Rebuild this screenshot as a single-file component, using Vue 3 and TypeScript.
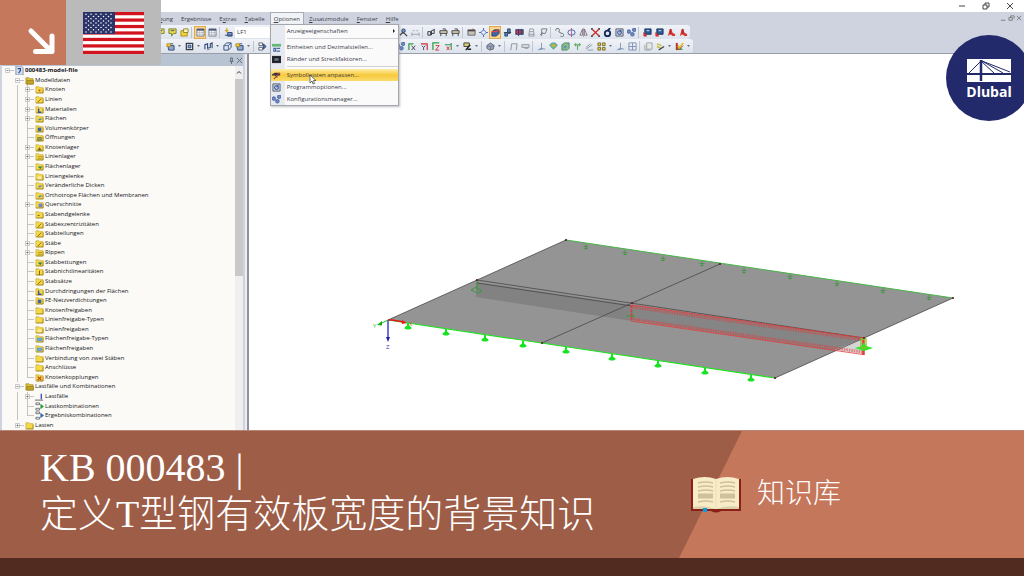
<script setup lang="ts">
type Shape = { d: string; f?: string; s?: string; w?: number }
interface Tool { icon: string; label: string; caret?: boolean; on?: boolean }
interface Row { t: string; l: number; e?: '+' | '-'; k: string; last?: boolean }

const N = '#2c4577'
const G = '#8d929d'
const K = '#3b3f49'
const R = '#d22f2f'
const Y = '#f0d23c'

const icons: Record<string, Shape[]> = {
  folder: [{ d: 'M1 2h3.500l1 1H9v6H1z', f: '#f5da48', s: '#c4a431', w: 0.7 }, { d: 'M1.500 8.800h7.500V4', s: '#96781c', w: 0.7 }],
  folderDark: [{ d: 'M1 2h3.500l1 1H9v6H1z', f: '#e0c030', s: '#9c8322', w: 0.7 }, { d: 'M2 5h7.500v4H2z', f: '#c2a428', s: '#857018', w: 0.6 }],
  open: [{ d: 'M1 3h3l1 1h3v5H1z', f: Y, s: '#a98a1c' }, { d: 'M4 1h5v4H4z', f: '#fff7c0', s: '#8a8420' }],
  note: [{ d: 'M1 1h8v5H6L4 9V6H1z', f: '#f2e04f', s: '#6d7a34' }, { d: 'M3 3h4', s: N }],
  table: [{ d: 'M1 1h8v8H1z', f: '#f5f7fa', s: '#777c88' }, { d: 'M1 2h8', s: '#4c5a78', w: 2 }, { d: 'M4 3v6M7 3v6M1 5h8M1 7h8', s: '#a1a7b5', w: 0.6 }],
  load: [{ d: 'M1 8h8M4 5h5v4H4z', f: '#7d93c0', s: N }, { d: 'M3 0v5M1 3h4', s: '#d5a72b', w: 1.4 }],
  box: [{ d: 'M2 4h7v5H3z', f: '#92a6cf', s: N }, { d: 'M1 2h4v3H1z', f: Y, s: '#b08b22' }, { d: 'M5 2h3', s: N }],
  frame: [{ d: 'M1.5 1.5h7v7h-7z', s: K, w: 1.4 }, { d: 'M3.5 3.5h3v3h-3z', f: '#8fb0e4', s: N }],
  wave: [{ d: 'M1 8V3l3-1v5l3-1V2l2-1v6', s: N, w: 1.2 }, { d: 'M3 9l4-1', s: G }],
  cube: [{ d: 'M1 4l3-3h5v5l-3 3H1z', f: '#dce4f2', s: N }, { d: 'M1 4h5l3-3M6 4v5', s: N, w: 0.8 }],
  flow: [{ d: 'M1 1h4v3H1zM1 6h4v3H1z', f: '#fff', s: K, w: 0.8 }, { d: 'M6 2l3 3-3 3z', f: '#4670b6', s: N }],
  person: [{ d: 'M3 3a2 2 0 1 0 4 0 2 2 0 1 0-4 0', f: '#6f8fc0', s: N }, { d: 'M1 8l3-3 2 1 3 3', s: K, w: 1.4 }],
  dims: [{ d: 'M1 7h8M1 5v4M9 5v4M2 3h2M6 3h2', s: G, w: 0.8 }],
  wrench: [{ d: 'M1 4h3v4H1zM5 8V3l3-1M8 1v5H5', s: K, w: 1.1 }],
  beam: [{ d: 'M1 3h8v3H1z', f: '#d9cfa5', s: K }, { d: 'M2 6v3M8 6v3M4 1h3v2', s: K }],
  beamG: [{ d: 'M1 3h8v3H1z', f: '#dfe1e5', s: G }, { d: 'M4 7h4', s: G }],
  list: [{ d: 'M1 2h8v6H1z', f: '#c6c3b4', s: '#606570' }, { d: 'M1 3h8', s: K, w: 1.4 }, { d: 'M6 1l3 2', s: '#a34d2e' }],
  target: [{ d: 'M5 0v10M0 5h10', s: N, w: 0.8 }, { d: 'M5 2l3 3-3 3-3-3z', f: '#e8edff', s: '#4560c0' }],
  render: [{ d: 'M1 4l3-2h5v4L6 9H1z', f: '#3e66a6', s: N }, { d: 'M1 4h5l3-2', s: '#e8443a', w: 1.4 }],
  solid: [{ d: 'M2 5h3V1h3v5H5v3H2z', f: '#4b83a6', s: N }, { d: 'M1 5h8', s: K }],
  solidR: [{ d: 'M1 2h8v5H1z', f: '#c83a3a', s: '#253e73', w: 1.2 }, { d: 'M4 1v8M7 1v6', s: N, w: 1.1 }],
  tower: [{ d: 'M3 1h4l1 8H2zM3 4h4M2 7h6', s: G, w: 0.9 }],
  flag: [{ d: 'M3 9V1h6L7 6H3M1 8l3-3', s: '#6b7487', w: 1 }],
  link: [{ d: 'M1 3a2 2 0 1 1 3 1l3 2a2 2 0 1 1-1 3', s: '#555b6a', w: 1 }],
  globe: [{ d: 'M1 5a4 3 0 1 0 8 0 4 3 0 1 0-8 0', s: '#4465c1', w: 1.1 }, { d: 'M5 0v10', s: '#c65c5c' }],
  mirror: [{ d: 'M4 1v7H1zM6 1v7h3z', s: '#666c79', w: 0.9 }, { d: 'M5 0v10', s: '#c65c5c', w: 0.6 }],
  cross: [{ d: 'M1 1l8 8M9 1L1 9', s: R, w: 1.5 }, { d: 'M0 0h2v2H0zM8 0h2v2H8zM0 8h2v2H0zM8 8h2v2H8z', f: '#555' }],
  ring: [{ d: 'M2 6a3 3 0 1 0 6 0 3 3 0 1 0-6 0M5 3l3-3', s: '#172b59', w: 2 }],
  gear: [{ d: 'M1 1h8v8H1z', f: '#cbd0d8', s: '#555b68' }, { d: 'M3 5a2 2 0 1 0 4 0 2 2 0 1 0-4 0M7 2L5 5', f: '#f7f9ff', s: '#3151a0', w: 1.2 }],
  balls: [{ d: 'M0 4a2 2 0 1 0 4 0 2 2 0 1 0-4 0M6 2a2 2 0 1 0 4 0 2 2 0 1 0-4 0M4 7a2 2 0 1 0 4 0 2 2 0 1 0-4 0', f: '#6c8bc8', s: '#324f91', w: 0.8 }],
  module: [{ d: 'M2 1h7v6H2z', f: '#2a5b93', s: '#1e365f' }, { d: 'M4 3h3', s: '#e4efff' }, { d: 'M1 5v4h3z', f: '#d93a3a', s: R }],
  pdf: [{ d: 'M3 1h2l1 4 3 2v2H6L4 7 1 9z', f: '#d93636' }, { d: 'M4 1v6', s: '#a52020' }],
  axisX: [{ d: 'M1 9V2h5', s: '#31a044', w: 1.4 }, { d: 'M4 4l4 5M8 4L4 9', s: K }],
  axisY: [{ d: 'M1 2h7v7', s: R, w: 1.3 }, { d: 'M2 4l2 2 2-2M4 6v3', s: N }],
  axisZ: [{ d: 'M1 9V1h7', s: '#31a044', w: 1.4 }, { d: 'M4 4h4L4 9h4', s: R }],
  axisN: [{ d: 'M1 3h7M8 1v8', s: '#34914d', w: 1.2 }, { d: 'M3 5l3 4M6 5L3 9', s: R }],
  pencil: [{ d: 'M1 1h6v4H1z', f: '#d5d06e', s: K }, { d: 'M3 9l5-6M5 8h4', s: '#222', w: 1.5 }],
  iso: [{ d: 'M1 4l4-3 4 3-1 4-4 1-3-2z', f: '#9ea8b8', s: '#59657a' }, { d: 'M1 4l4 1 4-1M5 5v4', s: '#59657a', w: 0.7 }],
  bracket: [{ d: 'M2 9L3 2h6L8 9', s: '#888e9b', w: 1 }],
  support: [{ d: 'M5 1v6L1 9M5 7l4 1', s: '#8795ae', w: 1 }, { d: 'M3 8h3', s: '#5371b2' }],
  color: [{ d: 'M1 4c0-4 8-4 8 0L5 8z', f: '#72bd68', s: '#4f91bb' }, { d: 'M3 4h4', s: '#e1af36', w: 2 }],
  block: [{ d: 'M1 3l3-2h5v6L7 9H1z', f: '#8cbf81', s: '#4a8770' }, { d: 'M3 4h3v3H3z', f: '#5e91c0' }],
  tree: [{ d: 'M5 9V3M1 3h8M3 1v4M7 1v4', s: '#5fac68', w: 1.2 }],
  diag: [{ d: 'M1 8l7-5M1 6l5-4M3 9h6', s: '#8997a1', w: 1 }],
  squares: [{ d: 'M1 1h3v3H1zM6 1h3v3H6zM1 6h3v3H1zM6 6h3v3H6z', f: '#e6cc47', s: '#746c31' }],
  grid: [{ d: 'M1 1h8v8H1zM5 1v8M1 5h8', s: '#7f8fb2', w: 1 }],
  pages: [{ d: 'M3 1h6v7H3zM1 3v6h6', s: '#9ba1a8', f: '#e8e9df' }],
  paint: [{ d: 'M1 2l5 2M1 5l5 2', s: '#c4bd3c', w: 1.6 }, { d: 'M3 9l6-4', s: K, w: 1.4 }],
  palette: [{ d: 'M1 1v8h8z', f: '#36a659' }, { d: 'M1 1h2v8H1z', f: '#c62c2c' }, { d: 'M3 4l2 3 4-6', s: '#e3bb2c', w: 1.8 }, { d: 'M4 9l5-5', s: '#c62c2c' }],
  units: [{ d: 'M0 1h10v3H0z', f: '#62b878' }, { d: 'M2 6h2v3H2zM5 6h4M5 9h4', s: '#4568a5', w: 1.2 }],
  margins: [{ d: 'M0 1h10v8H0z', f: '#24272d' }, { d: 'M2 3h6v4H2z', f: '#68707c', s: '#10131a' }],
  tools: [{ d: 'M0 4l3-2h6v3H0z', f: '#3d3038' }, { d: 'M2 9l5-5M6 3h3', s: '#b8402f', w: 1.3 }, { d: 'M3 4l3 3', s: '#4b4e58', w: 1.3 }],
  lc: [{ d: 'M0 9h9', s: '#555' }, { d: 'M7 2v6', s: '#3a4eb4', w: 1.5 }],
  lk: [{ d: 'M1 1h4v2H1zM1 7h4v2H1z', s: '#4d535c', w: 0.8 }, { d: 'M6 2l4 3-4 3z', f: '#2c9d49' }],
  ek: [{ d: 'M1 1h4v2H1zM1 7h4v2H1z', s: '#4d535c', w: 0.8 }, { d: 'M6 2l4 3-4 3z', f: '#3469b5' }],
  file: [{ d: 'M1 0h6l2 2v8H1z', f: '#d5deee', s: '#8292ac' }, { d: 'M3 3h3v2L4 8', s: '#26468b', w: 1.3 }],
}

const marks: Record<string, Shape> = {
  dot: { d: 'M4 5h2v2H4z', f: '#cf4a24' },
  line: { d: 'M3 8l4-4', s: '#8a5c12' },
  mat: { d: 'M4 4v4h3', s: '#34559a', w: 1.6 },
  area: { d: 'M3 7l2-2h3L6 7z', f: '#4f7bbf' },
  vol: { d: 'M3 4h4v4H3z', f: '#41639f' },
  hole: { d: 'M3 5h4v3H3z', f: '#9cab43', s: '#5c6b4f', w: 0.8 },
  sup: { d: 'M3 8l2-3 2 3z', f: '#bd3f22', s: '#2c8b3d', w: 0.7 },
  lsup: { d: 'M3 5h5M3 7h5', s: '#a8942a' },
  asup: { d: 'M3 5h5L6 8z', f: '#2b7f4c' },
  pale: { d: 'M3 5h4v3H3z', f: '#f7efb0' },
  sect: { d: 'M4 4h4v4H4z', f: '#6e86c4' },
  hinge: { d: 'M3 6h2', s: '#5a4a12' },
  bar: { d: 'M5 4v5', s: '#7a5a10' },
  blue: { d: 'M2 4h6v4H2z', f: '#6da3cf' },
  x: { d: 'M3 4l4 4M7 4L3 8', s: '#c33c23', w: 1.3 },
}

function shapes(k: string): Shape[] {
  if (icons[k]) return icons[k]
  return marks[k] ? [...icons.folder, marks[k]] : icons.folder
}

const r = (t: string, k = 'folder', e?: '+' | '-', l = 2): Row => ({ t, k, e, l })
const rows: Row[] = [
  r('000483-model-file', 'file', '-', 0),
  r('Modelldaten', 'folderDark', '-', 1),
  r('Knoten', 'dot', '+'), r('Linien', 'line', '+'), r('Materialien', 'mat', '+'), r('Flächen', 'area', '+'),
  r('Volumenkörper', 'vol'), r('Öffnungen', 'hole'), r('Knotenlager', 'sup', '+'), r('Linienlager', 'lsup', '+'),
  r('Flächenlager', 'asup'), r('Liniengelenke', 'pale'), r('Veränderliche Dicken', 'area'),
  r('Orthotrope Flächen und Membranen', 'area'), r('Querschnitte', 'sect', '+'), r('Stabendgelenke', 'hinge'),
  r('Stabexzentrizitäten', 'line'), r('Stabteilungen', 'line'), r('Stäbe', 'line', '+'), r('Rippen', 'lsup', '+'),
  r('Stabbettungen', 'asup'), r('Stabnichtlinearitäten', 'bar'), r('Stabsätze', 'line'),
  r('Durchdringungen der Flächen', 'mat'), r('FE-Netzverdichtungen', 'vol'), r('Knotenfreigaben'),
  r('Linienfreigabe-Typen'), r('Linienfreigaben', 'pale'), r('Flächenfreigabe-Typen', 'blue'),
  r('Flächenfreigaben', 'blue'), r('Verbindung von zwei Stäben'), r('Anschlüsse'),
  { ...r('Knotenkopplungen', 'x'), last: true },
  r('Lastfälle und Kombinationen', 'folderDark', '-', 1), r('Lastfälle', 'lc', '+'), r('Lastkombinationen', 'lk'),
  { ...r('Ergebniskombinationen', 'ek'), last: true }, r('Lasten', 'folder', '+', 1),
]

const menus = [
  ['Berech', 'n', 'ung'], ['Er', 'g', 'ebnisse'], ['E', 'x', 'tras'], ['', 'T', 'abelle'],
  ['', 'O', 'ptionen'], ['', 'Z', 'usatzmodule'], ['', 'F', 'enster'], ['', 'H', 'ilfe'],
]

const t = (icon: string, label: string, caret = false, on = false): Tool => ({ icon, label, caret, on })
const top1: Tool[][] = [
  [t('note', 'Öffnen'), t('note', 'Notiz'), t('open', 'Ordner')],
  [t('table', 'Tabelle', false, true), t('table', 'Panel')],
  [t('load', 'Lastfall')],
]
const top2: Tool[][] = [
  [t('person', 'Ansicht'), t('dims', 'Maße')],
  [t('wrench', 'Werkzeug'), t('beam', 'Stab'), t('beam', 'Träger')],
  [t('list', 'Liste'), t('target', 'Fang'), t('render', 'Rendering', false, true), t('solid', 'Volumen'), t('solidR', 'Querschnitt'), t('tower', 'Gerüst'), t('flag', 'Markierung')],
  [t('link', 'Verbinden'), t('globe', 'Drehen'), t('mirror', 'Spiegeln'), t('cross', 'Löschen'), t('ring', 'Kreis'), t('gear', 'Optionen'), t('balls', 'Konfiguration')],
  [t('module', 'Modul 1'), t('module', 'Modul 2'), t('pdf', 'Bericht 1'), t('pdf', 'Bericht 2')],
]
const low1: Tool[][] = [
  [t('box', 'Knoten', true), t('frame', 'Fläche', true), t('wave', 'Linie', true), t('cube', 'Körper'), t('box', 'Öffnung', true)],
  [t('flow', 'Kombination')],
]
const low2: Tool[][] = [
  [t('balls', 'Auswahl'), t('axisX', 'Ansicht X'), t('axisY', 'Ansicht Y'), t('axisZ', 'Ansicht Z'), t('axisN', 'Ansicht -X', true), t('pencil', 'Zeichnen', true)],
  [t('iso', 'Isometrie', true)],
  [t('bracket', 'Rahmen'), t('beamG', 'Balken')],
  [t('support', 'Lager'), t('color', 'Farben'), t('block', 'Block'), t('tree', 'Struktur'), t('diag', 'Diagramm'), t('squares', 'Kacheln', true), t('support', 'Achsen'), t('grid', 'Raster')],
  [t('pages', 'Seiten'), t('paint', 'Stift', true), t('palette', 'Palette', true)],
]

const options = [
  { t: 'Anzeigeeigenschaften', k: '', sep: true, more: true },
  { t: 'Einheiten und Dezimalstellen...', k: 'units' },
  { t: 'Ränder und Streckfaktoren...', k: 'margins', sep: true },
  { t: 'Symbolleisten anpassen...', k: 'tools', hot: true },
  { t: 'Programmoptionen...', k: 'gear' },
  { t: 'Konfigurationsmanager...', k: 'balls' },
]

const front = [[408, 323], [446, 329], [485, 335], [523, 341], [566, 347], [612, 354], [658, 361], [705, 368], [751, 375]]
const back = [[586, 244], [625, 250], [663, 256], [702, 261], [744, 268], [790, 274], [837, 281], [883, 288], [929, 295]]
const nodes = [[566, 240], [720, 264], [953, 298], [477, 280], [632, 303], [864, 338], [542, 343], [775, 378]]
const stars = Array.from({ length: 9 }, (_, y) =>
  Array.from({ length: y % 2 ? 5 : 6 }, (_, x) => ({ x: 3 + x * 5 + (y % 2 ? 2.5 : 0), y: 2.3 + y * 2.2 }))).flat()
</script>

<template>
  <div class="page">
    <main class="app">
      <header class="titlebar">
        <button aria-label="Minimieren"><svg viewBox="0 0 8 8"><path d="M1 4h6" /></svg></button>
        <button aria-label="Wiederherstellen"><svg viewBox="0 0 8 8"><path d="M1 3h4v4H1zM3 3V1h4v4H5" /></svg></button>
        <button aria-label="Schließen"><svg viewBox="0 0 8 8"><path d="M1 1l6 6M7 1L1 7" /></svg></button>
      </header>
      <nav class="menubar">
        <div v-for="m in menus" :key="m[2]" class="menu">
          <button :class="{ open: m[1] === 'O' }">{{ m[0] }}<u>{{ m[1] }}</u>{{ m[2] }}</button>
          <div v-if="m[1] === 'O'" class="dropdown">
            <template v-for="o in options" :key="o.t">
              <button class="option" :class="{ hot: o.hot }">
                <span class="slot">
                  <svg v-if="o.k" viewBox="0 0 10 10"><path v-for="(p, i) in shapes(o.k)" :key="i" :d="p.d" :fill="p.f || 'none'" :stroke="p.s || 'none'" :stroke-width="p.w || 1" /></svg>
                </span>
                <span class="name">{{ o.t }}</span>
                <svg v-if="o.more" class="more" viewBox="0 0 4 6"><path d="M1 1l2 2-2 2z" /></svg>
              </button>
              <hr v-if="o.sep" />
            </template>
            <svg class="cursor" viewBox="0 0 8 11"><path d="M1 1v8l2-2 1 3 1.500-.5L4.500 6.500H7z" /></svg>
          </div>
        </div>
        <div class="mdi">
          <button aria-label="Fenster minimieren"><svg viewBox="0 0 8 8"><path d="M1 6h5" /></svg></button>
          <button aria-label="Fenster wiederherstellen"><svg viewBox="0 0 8 8"><path d="M1 3h4v3H1zM3 3V1h4v3" /></svg></button>
          <button aria-label="Fenster schließen"><svg viewBox="0 0 8 8"><path d="M1 1l5 5M6 1L1 6" /></svg></button>
        </div>
      </nav>
      <div class="toolbars">
        <div v-for="n in 2" :key="n" class="toolbar" :class="'bar' + n">
          <div v-for="(g, gi) in n === 1 ? top1 : low1" :key="'a' + gi" class="group">
            <template v-for="b in g" :key="b.label">
              <button class="tool" :class="{ on: b.on }" :aria-label="b.label">
                <svg viewBox="0 0 10 10"><path v-for="(p, i) in shapes(b.icon)" :key="i" :d="p.d" :fill="p.f || 'none'" :stroke="p.s || 'none'" :stroke-width="p.w || 1" /></svg>
              </button>
              <i v-if="b.caret" class="caret" />
            </template>
          </div>
          <select v-if="n === 1" class="case" aria-label="Lastfall"><option>LF1</option></select>
          <div v-else class="spacer" />
          <div v-for="(g, gi) in n === 1 ? top2 : low2" :key="'b' + gi" class="group">
            <template v-for="b in g" :key="b.label">
              <button class="tool" :class="{ on: b.on }" :aria-label="b.label">
                <svg viewBox="0 0 10 10"><path v-for="(p, i) in shapes(b.icon)" :key="i" :d="p.d" :fill="p.f || 'none'" :stroke="p.s || 'none'" :stroke-width="p.w || 1" /></svg>
              </button>
              <i v-if="b.caret" class="caret" />
            </template>
          </div>
        </div>
      </div>
      <div class="work">
        <aside class="navigator">
          <div class="panelhead">
            <button aria-label="Anheften"><svg viewBox="0 0 8 8"><path d="M2 5h4M3 5V1h2v4M4 5v3" /></svg></button>
            <button aria-label="Navigator schließen"><svg viewBox="0 0 8 8"><path d="M1 1l6 6M7 1L1 7" /></svg></button>
          </div>
          <div class="panelbody">
            <ul class="tree">
              <li v-for="row in rows" :key="row.t" :class="['l' + row.l, { last: row.last }]">
                <span class="node">
                  <svg v-if="row.e" viewBox="0 0 7 7"><path d="M1.500 1.500h4v4h-4z" fill="#fff" stroke="#aaa" stroke-width=".6" /><path :d="row.e === '+' ? 'M2.500 3.500h2M3.500 2.500v2' : 'M2.500 3.500h2'" stroke="#556" stroke-width=".7" /></svg>
                </span>
                <svg class="ico" viewBox="0 0 10 10"><path v-for="(p, i) in shapes(row.k)" :key="i" :d="p.d" :fill="p.f || 'none'" :stroke="p.s || 'none'" :stroke-width="p.w || 1" /></svg>
                <span>{{ row.t }}</span>
              </li>
            </ul>
            <div class="scroll">
              <svg viewBox="0 0 8 8"><path d="M2 5l2-2 2 2" /></svg>
              <div class="thumb" />
            </div>
          </div>
        </aside>
        <section class="view">
          <svg class="model" viewBox="249 54 775 376" preserveAspectRatio="xMinYMin meet">
            <path d="M388 320L566 240 953 298 775 378z" fill="#949494" />
            <path d="M476 282L632 305 632 321 476 297z" fill="#828282" />
            <path d="M632 305L864 338 835 351 632 320z" fill="#858585" />
            <path d="M864 338V354L835 350z" fill="#d5d5d5" />
            <g stroke="#474747" stroke-width=".8" fill="none">
              <path d="M388 320L566 240M953 298L775 378M720 264L542 343M477 280L864 338M477 283L632 306" />
            </g>
            <path d="M566 240L953 298" stroke="#46b546" />
            <path d="M388 320L775 378" stroke="#1fe01f" stroke-width="1.200" />
            <g v-for="p in back" :key="'b' + p[0]" :transform="`translate(${p[0]} ${p[1]})`" fill="none" stroke="#3f963f">
              <path d="M0 0v5M-2.500 2.500h5" stroke-width=".8" /><path d="M-1.500 4.500h3" stroke-width="1.200" />
            </g>
            <g v-for="p in front" :key="'f' + p[0]" :transform="`translate(${p[0]} ${p[1]})`" fill="#18e322">
              <path d="M-1 0h2v2.500l2.500 2v1L1.500 6.500h-3l-2-1v-1L-1 2.500z" />
            </g>
            <g stroke="#3a9a3c" fill="none"><path d="M477 281v9M471 290l5-3 6 4-4 2zM632 311v7M626 316h9" /></g>
            <g fill="none" stroke="#e83838">
              <path d="M632 307L864 340M631 319L863 352" stroke-width="3" stroke-dasharray="1.500 1" opacity=".55" />
              <path d="M632 305L864 338M631 321L863 354.500" stroke-width=".8" />
              <path d="M631.500 305v16" stroke-width="1.500" stroke-dasharray="3 1" /><path d="M863.500 340v15" stroke-width="2.500" />
            </g>
            <path d="M864 342l2 4 7 2-9 3-9-3 7-2z" fill="#27e92b" />
            <path d="M861 339h5v9h-5z" fill="none" stroke="#8bbe20" stroke-width="1.300" />
            <g fill="#572020"><circle v-for="p in nodes" :key="p[0]" :cx="p[0]" :cy="p[1]" r="1.100" /></g>
            <path d="M388 320H392L404 322" stroke="#e71717" fill="none" stroke-width="1.300" /><path d="M402 320l5 3-5 1z" fill="#e71717" />
            <path d="M388 320V338" stroke="#2626c8" stroke-width="1.300" /><path d="M386 337h4l-2 5z" fill="#2020a8" />
            <path d="M388 320L380 324" stroke="#19c019" /><path d="M382 321l-5 4 5 .5z" fill="#14a814" />
            <g class="axis"><text x="409" y="326" fill="#e04a4a">X</text><text x="373" y="328" fill="#32c832">Y</text><text x="386" y="349" fill="#3030a8">Z</text></g>
          </svg>
        </section>
      </div>

      <div class="corner">
        <div class="arrow"><svg viewBox="0 0 66 65"><path d="M31 31L51 51M35.500 51.500H52M52 51.500V36" /></svg></div>
        <div class="flag">
          <svg viewBox="0 0 61 42" role="img" aria-label="USA">
            <rect width="61" height="42" fill="#fff" />
            <rect v-for="i in 7" :key="i" width="61" height="3.230" :y="(i - 1) * 6.461" fill="#d3141f" />
            <rect width="32" height="22" fill="#2a3468" />
            <circle v-for="(s, i) in stars" :key="'s' + i" :cx="s.x" :cy="s.y" r=".75" fill="#fff" />
          </svg>
        </div>
      </div>
      <div class="brand">
        <svg viewBox="0 0 44 24">
          <path d="M0 0h44v14H0z" fill="#fff" /><path d="M0 16h44v7H0z" fill="#fff" />
          <path d="M14 1v21" stroke="#232a6b" stroke-width="2.500" />
          <path d="M2 14L14 2 27 14M15 2L36 14M15 2L43 13" fill="none" stroke="#232a6b" stroke-width="1" />
        </svg>
        <span>Dlubal</span>
      </div>
    </main>

    <footer class="banner">
      <h1><span class="code">KB 000483 |</span><span class="topic">定义T型钢有效板宽度的背景知识</span></h1>
      <div class="category">
        <svg viewBox="0 0 50 36">
          <path d="M0 2h50v32H30q-5 3-10 0H0z" fill="#8c1f18" />
          <path d="M2 2Q14-2 25 2 36-2 48 2V32H2z" fill="#f8ebc8" />
          <path d="M2 30Q14 28 25 32 36 28 48 30V32H2z" fill="#d9d2a6" />
          <path d="M25 2v29" stroke="#efddb0" />
          <path d="M7 6q8-2 15 0M7 10q8-2 15 0M7 14q8-2 15 0M7 25q8-2 15 0M29 6q8-2 15 0M29 10q8-2 15 0M29 14q8-2 15 0M29 25q8-2 15 0" fill="none" stroke="#cfc19a" stroke-width="1.600" />
          <path d="M7 16.500h15v5H7zM29 16.500h15v5H29z" fill="#cfc19a" />
          <path d="M12 31h4v4h-4z" fill="#0c9be0" />
        </svg>
        <span>知识库</span>
      </div>
    </footer>
    <div class="strip" />
  </div>
</template>

<style>
body { margin: 0; }
</style>

<style scoped>
* { box-sizing: border-box; }
.page { min-height: 100vh; display: flex; flex-direction: column; overflow: hidden; font-family: "Open Sans", sans-serif; font-size: 6px; color: #333; }
button { padding: 0; border: 0; background: none; font: inherit; color: inherit; display: flex; align-items: center; }
svg { display: block; }
.app { position: relative; flex: 1; display: flex; flex-direction: column; background: #fff; overflow: hidden; }
.titlebar { height: 12px; display: flex; justify-content: flex-end; align-items: center; gap: 16px; padding-right: 10px; }
.titlebar svg, .mdi svg, .panelhead svg { width: 8px; height: 8px; fill: none; stroke: #444; stroke-width: 1; }
.menubar { height: 13px; display: flex; align-items: stretch; gap: 2px; padding-left: 136px; background: #cfd3df; color: #3a3f4c; }
.menu { position: relative; display: flex; }
.menu > button { padding: 0 3px; }
.menu > button.open { background: #f2f3f6; border: 1px solid #a8acb5; border-bottom: 0; }
.mdi { margin-left: auto; display: flex; gap: 1px; padding-right: 1px; }
.mdi svg { width: 7px; height: 7px; stroke: #777; }
.dropdown { position: absolute; z-index: 5; left: 0; top: 12px; width: 129px; background: linear-gradient(90deg, #e6e9ef 14px, #fafafa 14px); border: 1px solid #a4a7ad; box-shadow: 1px 1px 2px #8888; }
.option { width: 100%; height: 12px; gap: 4px; }
.option .slot { width: 12px; display: flex; justify-content: center; }
.option svg { width: 9px; height: 9px; }
.option .name { flex: 1; text-align: left; color: #3c404b; }
.option .more { width: 4px; height: 6px; margin-right: 2px; fill: #222; }
.option.hot { background: linear-gradient(#fdeea8, #f8c93c 50%, #fbdc6c); }
.dropdown hr { border: 0; border-top: 1px solid #cfd1d6; margin: 1px 0 2px 16px; }
.cursor { position: absolute; left: 38px; top: 49px; width: 8px; height: 11px; fill: #fff; stroke: #333; stroke-width: .7; }
.toolbars { background: #cfd3df; border-bottom: 1px solid #9a9ea8; }
.toolbar { width: max-content; height: 14px; display: flex; align-items: center; background: linear-gradient(#f0f3f8, #dde3ec); border-radius: 0 3px 3px 0; padding: 0 2px 0 155px; }
.bar2 { padding-left: 165px; }
.group { display: flex; align-items: center; gap: 2px; }
.group + .group { margin-left: 2px; padding-left: 3px; border-left: 1px solid #c0c5cf; }
.tool { width: 10px; height: 11px; justify-content: center; }
.tool svg { width: 9px; height: 9px; }
.tool.on { background: #ffd58c; outline: 1px solid #e0a850; }
.caret { width: 3px; height: 2px; margin: 0 1px; background: #6b7280; clip-path: polygon(0 0, 100% 0, 50% 100%); }
.case { appearance: none; width: 161px; height: 11px; margin: 0 2px; padding: 0 2px; border: 0; background: #fff; font: inherit; color: #333; }
.spacer { width: 128px; }
.work { flex: 1; display: flex; min-height: 0; }
.navigator { width: 249px; padding-left: 2px; padding-right: 6px; display: flex; flex-direction: column; background: linear-gradient(90deg, #cfd3df 245px, #eceef3 245px, #eceef3 247px, #8f929b 247px); }
.panelhead { height: 12px; display: flex; align-items: center; justify-content: flex-end; gap: 1px; background: #b9c4d2; }
.panelhead svg { width: 7px; height: 7px; stroke: #5e6673; }
.panelbody { flex: 1; display: flex; background: #fbfaf6; }
.tree { flex: 1; margin: 0; padding: 0 0 0 2px; list-style: none; display: grid; grid-auto-rows: 1fr; color: #17171c; }
.tree li { display: flex; align-items: center; line-height: 9px; gap: 1px; white-space: nowrap; }
.node { width: 10px; height: 100%; display: flex; align-items: center; background: linear-gradient(#c4c4c4, #c4c4c4) 3px 50% / 8px 1px no-repeat; }
.l2 .node { background: linear-gradient(#c4c4c4, #c4c4c4) 3px 50% / 8px 1px no-repeat, linear-gradient(#c4c4c4, #c4c4c4) 3px 0 / 1px 100% no-repeat; }
.l2.last .node { background: linear-gradient(#c4c4c4, #c4c4c4) 3px 50% / 8px 1px no-repeat, linear-gradient(#c4c4c4, #c4c4c4) 3px 0 / 1px 50% no-repeat; }
.node svg { width: 7px; height: 7px; }
.ico { width: 9px; height: 9px; }
.l0 { font-weight: 700; }
.l1 { padding-left: 10px; }
.l2 { padding-left: 20px; background: linear-gradient(#c4c4c4, #c4c4c4) 13px 0 / 1px 100% no-repeat; }
.scroll { width: 8px; background: #efefef; display: flex; flex-direction: column; }
.scroll svg { width: 8px; height: 13px; fill: none; stroke: #333; }
.thumb { height: 54%; background: #c9c9c9; }
.view { flex: 1; background: #fff; }
.model { width: 100%; height: 100%; }
.axis { font-size: 6px; }
.corner { position: absolute; z-index: 6; left: 0; top: 0; display: flex; height: 65px; }
.arrow { width: 66px; background: #c6785d; }
.arrow svg { width: 66px; height: 65px; fill: none; stroke: #fff; stroke-width: 5; stroke-linecap: round; }
.flag { width: 95px; background: #bababa; display: flex; justify-content: center; align-items: center; }
.flag svg { width: 61px; height: 42px; }
.brand { position: absolute; z-index: 6; right: -8px; top: 35px; width: 86px; height: 86px; border-radius: 50%; background: #232a6b; color: #fff; display: flex; flex-direction: column; align-items: center; padding-top: 24px; font-weight: 700; font-size: 14px; line-height: 18px; }
.brand svg { width: 44px; height: 24px; }
.banner { display: flex; align-items: stretch; background: #9d5d47; border-top: 1px solid #b98675; color: #fff; font-family: "Liberation Serif", "Noto Sans CJK SC", serif; }
h1 { flex: 1; margin: 0; padding: 14px 0 21px 40px; font-weight: 300; white-space: nowrap; }
h1 span { display: block; line-height: 46px; }
.code { font-size: 40px; }
.topic { font-size: 38px; }
.category { width: 345px; padding-left: 12px; display: flex; align-items: center; gap: 16px; font-size: 28px; font-weight: 300; position: relative; isolation: isolate; }
.category::before { content: ""; position: absolute; z-index: -1; inset: 0; background: #c5775c; clip-path: polygon(63px 0, 100% 0, 100% 100%, 0 100%); }
.category svg { width: 50px; height: 36px; }
.category span { padding-bottom: 8px; }
.strip { height: 18px; background: #512b20; }
</style>
